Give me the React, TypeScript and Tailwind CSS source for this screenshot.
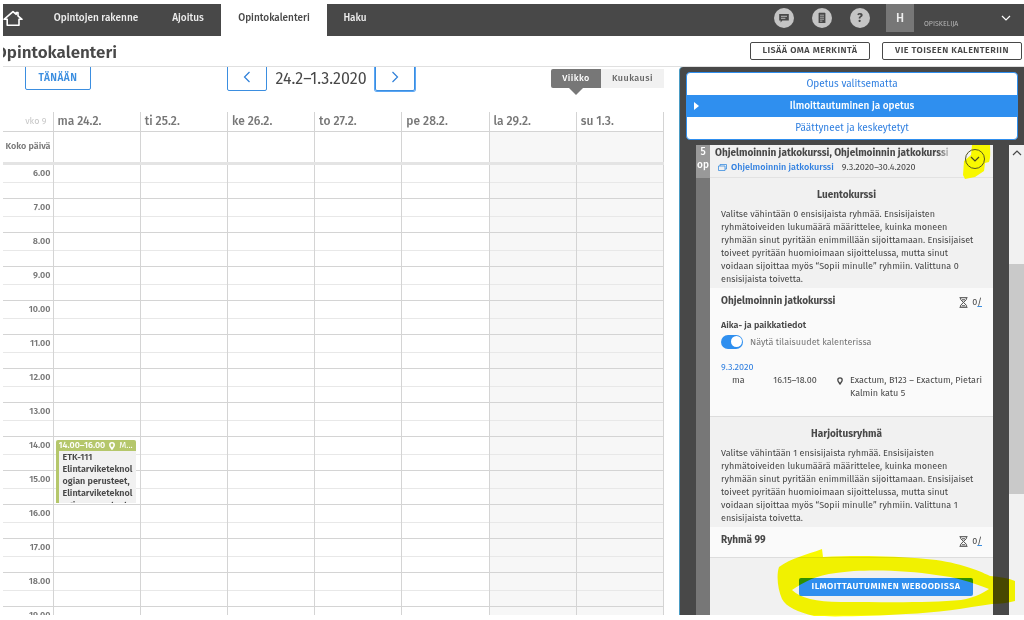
import React from "react";

const days = ["ma 24.2.", "ti 25.2.", "ke 26.2.", "to 27.2.", "pe 28.2.", "la 29.2.", "su 1.3."];
const hours = [6, 7, 8, 9, 10, 11, 12, 13, 14, 15, 16, 17, 18, 19];

function HomeIcon() {
  return (
    <svg width="20" height="17" viewBox="0 0 20 17" fill="none" stroke="#fff" strokeWidth="1.6">
      <path d="M1 9.3 L10 1.6 L13.2 4.3 V2.6 H15 V5.9 L19 9.3 H16 V15.2 H4.2 V9.3 Z" strokeLinejoin="round" />
    </svg>
  );
}

function Chevron({ dir, size = 12, color = "currentColor" }: { dir: "left" | "right" | "up" | "down"; size?: number; color?: string }) {
  const paths = {
    left: "M8.5 1 L3.5 6 L8.5 11",
    right: "M3.5 1 L8.5 6 L3.5 11",
    up: "M2 8 L6 4 L10 8",
    down: "M2 4 L6 8 L10 4",
  };
  return (
    <svg width={size} height={size} viewBox="0 0 12 12" fill="none" stroke={color} strokeWidth="1.2">
      <path d={paths[dir]} />
    </svg>
  );
}

function ChatIcon() {
  return (
    <svg width="20" height="20" viewBox="0 0 20 20">
      <circle cx="10" cy="10" r="10" fill="#c4c4c4" />
      <path d="M5.2 6h9.6v6.6H8.4L6.6 14.4v-1.8H5.2Z" fill="#484848" />
      <path d="M7 8.3h6M7 10.3h4.4" stroke="#c4c4c4" strokeWidth="0.9" />
    </svg>
  );
}

function NotesIcon() {
  return (
    <svg width="20" height="20" viewBox="0 0 20 20">
      <circle cx="10" cy="10" r="10" fill="#c4c4c4" />
      <path d="M6.6 5h6.8v10H6.6Z" fill="#484848" />
      <path d="M8 7.2h4M8 9.2h4M8 11.2h4M8 13.1h2.4" stroke="#c4c4c4" strokeWidth="0.8" />
      <path d="M8 4.4v1.4M10 4.4v1.4M12 4.4v1.4" stroke="#484848" strokeWidth="0.9" />
    </svg>
  );
}

function Hourglass() {
  return (
    <svg width="9" height="11" viewBox="0 0 9 11" fill="none" stroke="#484848" strokeWidth="1">
      <path d="M0.5 0.7h8M0.5 10.3h8M1.7 1v1.6L4.5 5.4 7.3 2.6V1M1.7 10V8.2L4.5 5.4l2.8 2.8V10M3 8.8h3M3 2.8h3" />
    </svg>
  );
}

function Pin({ color, filled }: { color: string; filled?: boolean }) {
  return (
    <svg width="6" height="8" viewBox="0 0 6 8" fill="none" stroke={color} strokeWidth={filled ? 1.6 : 1.3}>
      <path d="M3 7 C2.4 5.8 0.8 4.6 0.8 3 A2.2 2.2 0 0 1 5.2 3 C5.2 4.6 3.6 5.8 3 7Z" />
    </svg>
  );
}

function TopBar() {
  const tab = "flex h-full items-center pb-1 text-[10px] font-medium whitespace-nowrap";
  return (
    <header className="flex h-8 shrink-0 items-stretch justify-between overflow-hidden bg-[#484848] text-[#eeeeee]">
      <nav className="flex items-stretch">
        <a href="#koti" aria-label="Etusivu" className="flex w-[34px] items-center pb-1">
          <HomeIcon />
        </a>
        <a href="#rakenne" className={tab + " w-[118px] justify-center"}>Opintojen rakenne</a>
        <a href="#ajoitus" className={tab + " w-[66px] justify-center"}>Ajoitus</a>
        <a href="#kalenteri" aria-current="page" className={tab + " w-[106px] justify-center bg-white text-[#484848]"}>Opintokalenteri</a>
        <a href="#haku" className={tab + " w-14 justify-center"}>Haku</a>
      </nav>
      <div className="flex items-stretch">
        <div className="flex items-center gap-[18px] pr-4 pb-1">
          <button aria-label="Viestit"><ChatIcon /></button>
          <button aria-label="Muistiinpanot"><NotesIcon /></button>
          <button aria-label="Ohje" className="flex size-5 items-center justify-center rounded-full bg-[#c4c4c4] text-xs font-bold text-[#484848]">?</button>
        </div>
        <span className="flex h-7 w-7 items-center justify-center bg-[#777777] text-xs font-medium">H</span>
        <span className="flex w-[86px] items-center pt-2 pl-[10px] text-[7px] text-[#b5b5b5]">OPISKELIJA</span>
        <button aria-label="Valikko" className="flex w-6 items-center justify-start pb-1"><Chevron dir="down" color="#fff" /></button>
      </div>
    </header>
  );
}

function Calendar() {
  const nav = "flex h-[27px] w-10 items-center justify-center rounded-xs border border-[#3b8ee0] text-[#2d7fd8]";
  return (
    <section className="min-w-0 flex-1 overflow-hidden pr-[15px]">
      <div className="-mt-1 flex h-[49px] items-start justify-between pl-[22px]">
        <button className="h-[27px] w-[66px] rounded-xs border border-[#3b8ee0] pt-1 text-[10px] font-semibold tracking-wider text-[#3b8ee0]">TÄNÄÄN</button>
        <div className="flex w-[188px] items-center justify-between">
          <button aria-label="Edellinen" className={nav}><Chevron dir="left" /></button>
          <h2 className="pt-1 text-base whitespace-nowrap text-[#484848]">24.2–1.3.2020</h2>
          <button aria-label="Seuraava" className={nav + " ring-1 ring-[#5aa6f5]"}><Chevron dir="right" /></button>
        </div>
        <div className="flex pt-[6px] text-[9px] tracking-wider">
          <button className="relative h-[19px] w-[50px] rounded-l-xs bg-[#777777] font-medium text-white">
            Viikko
            <svg className="absolute top-[19px] left-[18px]" width="14" height="7" viewBox="0 0 14 7"><path d="M0 0h14L7 7Z" fill="#777777" /></svg>
          </button>
          <button className="h-[19px] w-[63px] bg-[#f1f1f1] font-medium text-[#666666]">Kuukausi</button>
        </div>
      </div>
      <table className="w-full table-fixed border-collapse text-[#777777]">
        <thead>
          <tr className="h-[19px] border-b border-[#d4d4d4]">
            <th className="w-[50px] pr-[6px] text-right text-[9px] font-normal text-[#c8c8c8]">vko 9</th>
            {days.map((d) => (
              <th key={d} className="border-x border-[#d4d4d4] p-0 pl-1 text-left text-xs leading-[18px] font-medium whitespace-nowrap">{d}</th>
            ))}
          </tr>
        </thead>
        <tbody>
          <tr className="h-8 border-b-[3px] border-[#e4e4e4]">
            <th className="p-0 pr-[2px] text-right text-[9px] font-semibold whitespace-nowrap">Koko päivä</th>
            {days.map((d, i) => (
              <td key={d} className={i > 4 ? "border-x border-x-[#d4d4d4] bg-[#f7f7f7]" : "border-x border-x-[#d4d4d4]"} />
            ))}
          </tr>
          {hours.map((h) => (
            <React.Fragment key={h}>
              <tr className="h-[18px] border-b border-[#e8e8e8]">
                <th className="p-0 pr-[2px] text-right text-[9px] leading-[17px] font-semibold">{h}.00</th>
                {days.map((d, i) => (
                  <td key={d} className={i > 4 ? "border-x border-x-[#d4d4d4] bg-[#f7f7f7] p-0" : "border-x border-x-[#d4d4d4] p-0"}>
                    {h === 14 && i === 0 && (
                      <div className="relative h-0 w-full">
                        <article className="absolute -top-[5px] right-1 left-[2px] h-[63px] overflow-hidden rounded-t-xs border-l-[3px] border-[#b5c76b] bg-[#f1f1f1] text-[9px]">
                          <p className="flex h-[11px] items-center gap-1 bg-[#b5c76b] leading-[11px] whitespace-nowrap text-white">
                            <span className="font-medium">14.00–16.00</span>
                            <Pin color="#fff" filled />
                            <span>M...</span>
                          </p>
                          <p className="pl-1 leading-[12px] font-semibold whitespace-nowrap text-[#484848]">
                            ETK-111<br />Elintarviketeknol<br />ogian perusteet,<br />Elintarviketeknol<br />ogian perusteet
                          </p>
                        </article>
                      </div>
                    )}
                  </td>
                ))}
              </tr>
              <tr className="h-4 border-b border-[#d4d4d4]">
                <td className="p-0" />
                {days.map((d, i) => (
                  <td key={d} className={i > 4 ? "border-x border-x-[#d4d4d4] bg-[#f7f7f7] p-0" : "border-x border-x-[#d4d4d4] p-0"} />
                ))}
              </tr>
            </React.Fragment>
          ))}
        </tbody>
      </table>
    </section>
  );
}

function GroupIntro({ title, count }: { title: string; count: number }) {
  return (
    <div className="h-[110px] bg-[#f1f1f1] px-[11px] pt-[9px]">
      <h3 className="mr-[10px] text-center text-[10px] leading-4 font-bold">{title}</h3>
      <p className="pt-[5px] text-[9px] leading-[13px] whitespace-nowrap">
        Valitse vähintään {count} ensisijaista ryhmää. Ensisijaisten<br />
        ryhmätoiveiden lukumäärä määrittelee, kuinka moneen<br />
        ryhmään sinut pyritään enimmillään sijoittamaan. Ensisijaiset<br />
        toiveet pyritään huomioimaan sijoittelussa, mutta sinut<br />
        voidaan sijoittaa myös “Sopii minulle” ryhmiin. Valittuna {count}<br />
        ensisijaista toivetta.
      </p>
    </div>
  );
}

function GroupTitle({ title }: { title: string }) {
  return (
    <div className="flex items-center justify-between">
      <h4 className="text-[10px] leading-4 font-bold">{title}</h4>
      <span className="flex items-center gap-1 pt-[2px] text-[9px] leading-3">
        <Hourglass />
        <span>0<a href="#paikat" className="text-[#484848] underline decoration-[#3b8ee0]">/</a></span>
      </span>
    </div>
  );
}

function Sidebar() {
  const tab = "flex h-[22px] w-full items-center justify-center text-[10px]";
  return (
    <aside className="relative flex w-[345px] shrink-0 flex-col rounded-tl-sm border-l border-[#4a9cc4] bg-[#484848] pt-[5px] text-[#484848]">
      <div className="mr-[6px] ml-[6px] shrink-0 overflow-hidden rounded-sm border border-[#2f8fef] bg-white text-[#2f7fe0]">
        <button className={tab}>Opetus valitsematta</button>
        <button className={tab + " relative bg-[#2f8fef] font-medium text-white"}>
          <svg className="absolute left-[7px]" width="5" height="8" viewBox="0 0 5 8"><path d="M0 0L5 4L0 8Z" fill="#fff" /></svg>
          Ilmoittautuminen ja opetus
        </button>
        <button className={tab}>Päättyneet ja keskeytetyt</button>
      </div>
      <div className="mt-[5px] flex min-h-0 flex-1">
        <div className="ml-4 flex w-[14px] shrink-0 flex-col bg-[#777777]">
          <p className="h-[33px] bg-[#999999] pt-px text-center text-[10px] leading-[13px] font-medium text-white">5<br />op</p>
        </div>
        <div className="min-w-0 flex-1 overflow-hidden bg-[#f1f1f1]">
          <div className="relative h-[33px] border-b border-[#e2e2e2] pl-[5px]">
            <svg className="absolute top-0 right-0" width="32" height="36" viewBox="0 0 32 36">
              <path d="M11 0H29C29 6 30 12 28 17L24 18L23 26L14 32L4 34L2 30L3 16L10 10Z" fill="#f8f800" />
            </svg>
            <h3 className="w-[237px] overflow-hidden text-[10px] leading-4 font-bold whitespace-nowrap [mask-image:linear-gradient(to_right,black_94%,transparent)]">
              Ohjelmoinnin jatkokurssi, Ohjelmoinnin jatkokurssi
            </h3>
            <p className="flex items-center gap-1 pl-[3px] text-[9px] leading-[13px]">
              <svg width="9" height="7" viewBox="0 0 9 7" fill="none" stroke="#3b8ee0" strokeWidth="0.8"><path d="M0.5 2h6.5v4.5H0.5ZM2 2V0.5h6.5v4.5H7" /></svg>
              <a href="#kurssi" className="mr-1 font-medium text-[#2f7fe0]">Ohjelmoinnin jatkokurssi</a>
              <span>9.3.2020–30.4.2020</span>
            </p>
            <button aria-label="Avaa" className="absolute top-1 right-2 flex size-5 items-center justify-center rounded-full border border-[#555522]">
              <Chevron dir="down" color="#484822" />
            </button>
          </div>
          <GroupIntro title="Luentokurssi" count={0} />
          <div className="h-[129px] border-b border-[#dddddd] bg-[#fafafa] px-[11px] pt-[5px]">
            <GroupTitle title="Ohjelmoinnin jatkokurssi" />
            <h5 className="mt-2 text-[9px] leading-4 font-semibold">Aika- ja paikkatiedot</h5>
            <label className="mt-[2px] flex items-center gap-[7px] text-[9px] leading-[14px] text-[#777777]">
              <input
                type="checkbox"
                role="switch"
                defaultChecked
                className="h-[14px] w-[22px] appearance-none rounded-full bg-[#2f8fef] before:ml-[10px] before:mt-px before:block before:size-[11px] before:rounded-full before:bg-white"
              />
              Näytä tilaisuudet kalenterissa
            </label>
            <p className="mt-3 text-[9px] leading-[13px] text-[#2f7fe0]">9.3.2020</p>
            <div className="flex text-[9px] leading-[13px] whitespace-nowrap">
              <span className="w-14 pl-[11px]">ma</span>
              <span className="w-[65px]">16.15–18.00</span>
              <span className="flex w-[18px] items-start pt-[3px] pl-1"><Pin color="#484848" /></span>
              <span>Exactum, B123 – Exactum, Pietari<br />Kalmin katu 5</span>
            </div>
          </div>
          <GroupIntro title="Harjoitusryhmä" count={1} />
          <div className="h-[31px] border-b border-[#dddddd] bg-[#fafafa] px-[11px] pt-[5px]">
            <GroupTitle title="Ryhmä 99" />
          </div>
          <div className="flex justify-end pt-5 pr-5">
            <button className="h-[18px] w-[174px] rounded-xs bg-[#2f8fef] text-[9px] font-semibold tracking-wider whitespace-nowrap text-white">ILMOITTAUTUMINEN WEBOODISSA</button>
          </div>
        </div>
        <div className="ml-4 flex w-[15px] shrink-0 flex-col items-center bg-[#f1f1f1] text-[#484848]">
          <span className="pt-[2px]"><Chevron dir="up" /></span>
          <div className="mt-[105px] h-[230px] w-full bg-[#c9c9c9]" />
        </div>
      </div>
      <svg className="pointer-events-none absolute right-2 -bottom-[3px] mix-blend-multiply" width="240" height="72" viewBox="0 0 240 72">
        <path
          fillRule="evenodd"
          fill="#ffff00"
          d="M46 3L47 11C80 9 120 10 150 13C178 15 202 24 214 30C224 31 232 32 239 35V55C232 57 224 58 216 58C190 62 160 67 130 68C100 70 60 71 38 70C22 66 10 61 6 53C2 44 0 30 3 21C15 12 30 9 46 3ZM16 44C24 52 40 56 65 56C110 56 155 57 185 54C196 52 206 48 213 43C195 36 180 31 160 29C130 24 85 23 60 27C40 29 28 36 16 44Z"
        />
      </svg>
    </aside>
  );
}

export default function App() {
  return (
    <div className="flex h-screen flex-col bg-white pt-1 pb-[5px] pl-[3px] font-['Fira_Sans','Open_Sans','Noto_Sans',sans-serif]">
      <TopBar />
      <div className="flex h-[31px] shrink-0 items-center justify-between overflow-hidden border-b border-[#e0e0e0] pr-[2px]">
        <h1 className="-ml-2 pt-1 text-[17px] font-semibold text-[#484848]">Opintokalenteri</h1>
        <div className="flex gap-3 text-[9px] font-semibold tracking-wider text-[#484848]">
          <button className="h-[18px] w-[120px] rounded-xs border border-[#484848] whitespace-nowrap">LISÄÄ OMA MERKINTÄ</button>
          <button className="h-[18px] w-[140px] rounded-xs border border-[#484848] whitespace-nowrap">VIE TOISEEN KALENTERIIN</button>
        </div>
      </div>
      <main className="flex min-h-0 flex-1">
        <Calendar />
        <Sidebar />
      </main>
    </div>
  );
}
